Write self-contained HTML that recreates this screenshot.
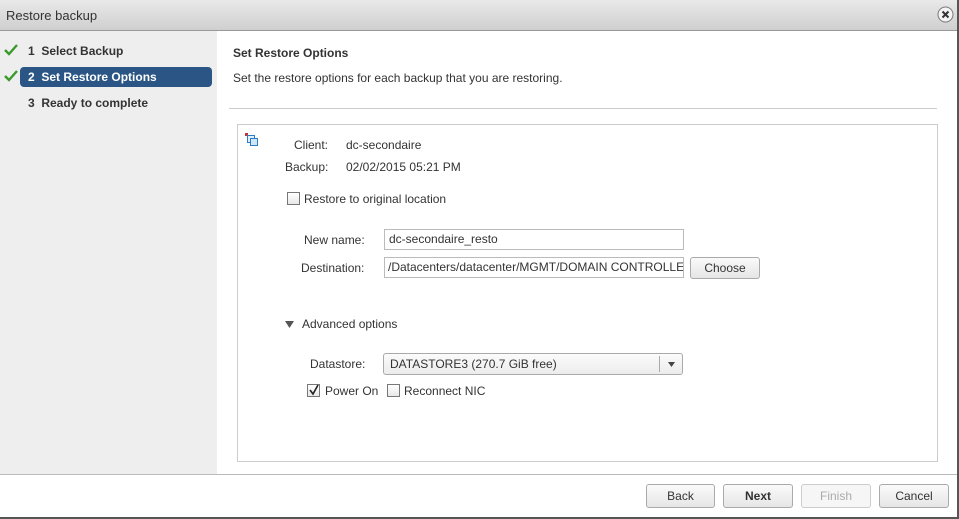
<!DOCTYPE html>
<html><head><style>
*{margin:0;padding:0;box-sizing:border-box}
body{width:959px;height:519px;background:#fff;font-family:"Liberation Sans",Arial,sans-serif;font-size:12px;color:#333;position:relative;overflow:hidden}
.abs{position:absolute}
#hdr{left:0;top:0;width:957px;height:31px;background:linear-gradient(#e9e9e9,#cfcfcf);border-bottom:1px solid #999}
#hdr span{position:absolute;left:6px;top:8px;font-size:13px;color:#333}
#rb{left:957px;top:0;width:2px;height:519px;background:#555}
#left{left:0;top:31px;width:217px;height:443px;background:#eee}
.step{position:absolute;font-size:12px;font-weight:bold;color:#333}
#sel{left:20px;top:67px;width:192px;height:20px;background:#2a5585;border-radius:4px}
#foot{left:0;top:474px;width:957px;height:43px;border-top:1px solid #bbb;background:#fff}
#bot{left:0;top:517px;width:957px;height:2px;background:#555}
.btn{position:absolute;height:24px;border:1px solid #aaa;border-radius:3px;background:linear-gradient(#fafafa,#e6e6e6);text-align:center;line-height:22px;font-size:12px;color:#333}
.lbl{position:absolute;font-size:12px;color:#333}
.inp{position:absolute;height:21px;border:1px solid #bbb;background:#fff;font-size:12px;line-height:19px;padding-left:4px;color:#333;white-space:nowrap;overflow:hidden}
.cb{position:absolute;width:13px;height:13px;border:1px solid #777;background:linear-gradient(#fff,#e8e8e8)}
</style></head><body>
<div id="hdr" class="abs"><span>Restore backup</span></div>
<svg class="abs" style="left:937px;top:6px" width="17" height="17"><circle cx="8.5" cy="8.5" r="7.5" fill="#f4f4f4" stroke="#777"/><path d="M5.5 5.5L11.5 11.5M11.5 5.5L5.5 11.5" stroke="#333" stroke-width="2"/></svg>
<div id="rb" class="abs"></div>
<div id="left" class="abs"></div>
<div id="sel" class="abs"></div>
<svg class="abs" style="left:4px;top:44px" width="14" height="12"><path d="M1 6L5 10L13 1" fill="none" stroke="#3a9a2a" stroke-width="2.4"/></svg>
<svg class="abs" style="left:4px;top:70px" width="14" height="12"><path d="M1 6L5 10L13 1" fill="none" stroke="#3a9a2a" stroke-width="2.4"/></svg>
<div class="step" style="left:28px;top:44px">1&nbsp; Select Backup</div>
<div class="step" style="left:28px;top:70px;color:#fff">2&nbsp; Set Restore Options</div>
<div class="step" style="left:28px;top:96px">3&nbsp; Ready to complete</div>

<div class="abs" style="left:233px;top:46px;font-weight:bold;font-size:12px">Set Restore Options</div>
<div class="abs" style="left:233px;top:71px">Set the restore options for each backup that you are restoring.</div>
<div class="abs" style="left:229px;top:108px;width:708px;height:1px;background:#ccc"></div>
<div class="abs" style="left:237px;top:124px;width:701px;height:338px;border:1px solid #ccc"></div>
<svg class="abs" style="left:245px;top:133px" width="14" height="14"><rect x="0" y="0" width="3" height="3" fill="#c33"/><rect x="2.5" y="2.5" width="7" height="7" fill="#e3f0fa" stroke="#2a7cc7"/><rect x="5.5" y="5.5" width="7" height="7" fill="#cfe6f7" stroke="#2a7cc7"/></svg>
<div class="lbl" style="left:294px;top:138px">Client:</div>
<div class="lbl" style="left:346px;top:138px">dc-secondaire</div>
<div class="lbl" style="left:285px;top:160px">Backup:</div>
<div class="lbl" style="left:346px;top:160px">02/02/2015 05:21 PM</div>
<div class="cb" style="left:287px;top:192px"></div>
<div class="lbl" style="left:304px;top:192px">Restore to original location</div>

<div class="lbl" style="left:304px;top:233px">New name:</div>
<div class="inp" style="left:384px;top:229px;width:300px">dc-secondaire_resto</div>
<div class="lbl" style="left:301px;top:261px">Destination:</div>
<div class="inp" style="left:384px;top:257px;width:300px;padding-left:3px">/Datacenters/datacenter/MGMT/DOMAIN CONTROLLE</div>
<div class="btn" style="left:690px;top:257px;width:70px;height:22px;line-height:20px">Choose</div>

<svg class="abs" style="left:285px;top:321px" width="9" height="7"><path d="M0 0H9L4.5 7Z" fill="#555"/></svg>
<div class="lbl" style="left:302px;top:317px">Advanced options</div>

<div class="lbl" style="left:310px;top:357px">Datastore:</div>
<div class="abs" style="left:383px;top:353px;width:300px;height:22px;border:1px solid #aaa;border-radius:3px;background:linear-gradient(#fbfbfb,#ececec)"></div>
<div class="lbl" style="left:390px;top:357px">DATASTORE3 (270.7 GiB free)</div>
<div class="abs" style="left:659px;top:356px;width:1px;height:16px;background:#aaa"></div>
<svg class="abs" style="left:668px;top:362px" width="7" height="5"><path d="M0 0H7L3.5 5Z" fill="#444"/></svg>
<div class="cb" style="left:307px;top:384px"></div>
<svg class="abs" style="left:308px;top:384px" width="12" height="12"><path d="M2 6L5 10L10 1" fill="none" stroke="#222" stroke-width="1.6"/></svg>
<div class="lbl" style="left:325px;top:384px">Power On</div>
<div class="cb" style="left:387px;top:384px"></div>
<div class="lbl" style="left:404px;top:384px">Reconnect NIC</div>

<div id="foot" class="abs"></div>
<div id="bot" class="abs"></div>
<div class="btn" style="left:646px;top:484px;width:69px">Back</div>
<div class="btn" style="left:723px;top:484px;width:70px;font-weight:bold">Next</div>
<div class="btn" style="left:801px;top:484px;width:70px;color:#aaa;border-color:#ccc;background:#f6f6f6">Finish</div>
<div class="btn" style="left:879px;top:484px;width:70px">Cancel</div>
</body></html>
